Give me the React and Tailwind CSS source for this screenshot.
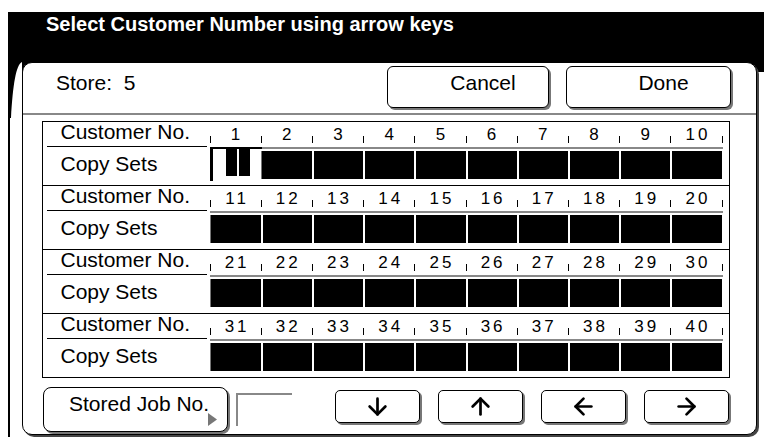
import { ArrowDown, ArrowUp, ArrowLeft, ArrowRight } from "lucide-react";

const Btn = ({ w, children }) => (
  <div className={`${w} h-[42px] bg-white border-[1.5px] border-black rounded-[6px] shadow-[2px_2px_0_#777] flex items-center justify-center pl-[30px] pb-[7px] text-[21px] leading-[24px]`}>
    {children}
  </div>
);

const ArrowBtn = ({ icon: Icon }) => (
  <div className="w-[85px] h-[33px] bg-white border-[1.5px] border-black rounded-[5px] shadow-[2px_2px_0_#777] flex items-center justify-center">
    <Icon size={27} strokeWidth={2.4} />
  </div>
);

const Group = ({ start, first }) => {
  const nums = Array.from({ length: 10 }, (_, i) => start + i);
  return (
    <div className={`flex ${first ? "" : "border-t border-black"}`}>
      {/* labels */}
      <div className="w-[167px]">
        <div className="h-[25px] ml-[4px] mr-[3px] border-b border-black pl-[14px] text-[21px] leading-[20px]">Customer No.</div>
        <div className="h-[38px] pl-[18px] pt-[7px] text-[21px] leading-[20px]">Copy Sets</div>
      </div>

      {/* numbers + cells */}
      <div className="w-[513px]">
        <div className="h-[25px] flex">
          <div className="w-[512px] grid grid-cols-10">
            {nums.map(n => (
              <div key={n} className="flex">
                <div className="w-px h-[7px] bg-black mt-[14px]" />
                <span className="flex-1 text-center text-[17px] leading-[25px] tracking-[3px] pl-[3px]">{n}</span>
              </div>
            ))}
          </div>
          <div className="w-px h-[7px] bg-black mt-[14px]" />
        </div>

        <div className="h-[2px] flex">
          {first && <div className="w-[52px] bg-black" />}
          <div className="flex-1 bg-[#888]" />
        </div>

        <div className="h-[36px] w-[512px] grid grid-cols-10 items-start">
          {nums.map((n, i) =>
            first && i === 0 ? (
              <div key={n} className="h-[32px] border-l-[3px] border-black bg-white flex gap-[2px] pl-[13px]">
                <div className="w-[11px] h-[27px] bg-black" />
                <div className="w-[11px] h-[27px] bg-black" />
              </div>
            ) : (
              <div key={n} className={`h-[28px] mt-[2px] bg-black ${i === 0 ? "border-l border-[#777]" : first && i === 1 ? "border-l border-[#777]" : "border-l-2 border-white"}`} />
            )
          )}
        </div>
      </div>
    </div>
  );
};

export default function App() {
  return (
    <div className="w-[764px] h-[437px] bg-white overflow-hidden font-['Liberation_Sans',Arial,sans-serif] text-black">
      <div className="h-[12px]" />

      {/* header */}
      <div className="ml-[8px] h-[50px] bg-black pl-[38px] text-white font-bold text-[20px] leading-[24px]">
        Select Customer Number using arrow keys
      </div>

      <div className="ml-[8px] flex bg-[linear-gradient(to_bottom,#000_10px,#fff_10px)]">
        {/* left edge */}
        <div className="w-[14px] h-[375px] border-l-2 border-black bg-white">
          <svg width="12" height="56" viewBox="0 0 12 56">
            <path d="M0 0H12C6 3 3 22 1 56H0Z" fill="#000" />
          </svg>
        </div>

        {/* panel */}
        <div className="w-[735px] h-[373px] bg-white border-[1.5px] border-black rounded-[10px] shadow-[2px_2px_0_#444] flex flex-col">
          <div className="h-[50px] flex items-start pl-[19px] pr-[25px]">
            <div className="ml-[14px] mt-[7.5px] text-[21px] leading-[24px] whitespace-pre">Store:  5</div>
            <div className="ml-auto mt-[2.5px] flex gap-[17px]">
              <Btn w="w-[162px]">Cancel</Btn>
              <Btn w="w-[165px]">Done</Btn>
            </div>
          </div>
          <div className="h-[2px] bg-[#888]" />

          <div className="mt-[6px] ml-[18.5px] w-[688px] border border-black">
            {[1, 11, 21, 31].map((s, i) => (
              <Group key={s} start={s} first={i === 0} />
            ))}
          </div>

          <div className="mt-[8.5px] ml-[19.5px] flex items-start">
            <div className="w-[185px] h-[45px] bg-white border-[1.5px] border-black rounded-[8px] shadow-[2px_2px_0_#777] flex items-start pl-[25.5px] pt-[4px]">
              <span className="text-[21px] leading-[24px]">Stored Job No.</span>
              <svg className="mt-[21.5px] -ml-[1px]" width="9" height="13" viewBox="0 0 9 13">
                <path d="M0 0L9 6.5L0 13Z" fill="#777" />
              </svg>
            </div>
            <div className="ml-[8px] mt-[6px] w-[56px] h-[33px] border-t-2 border-l-2 border-[#888]" />
            <div className="ml-[43px] mt-[3px] flex gap-[18px]">
              <ArrowBtn icon={ArrowDown} />
              <ArrowBtn icon={ArrowUp} />
              <ArrowBtn icon={ArrowLeft} />
              <ArrowBtn icon={ArrowRight} />
            </div>
          </div>
        </div>
      </div>
    </div>
  );
}
